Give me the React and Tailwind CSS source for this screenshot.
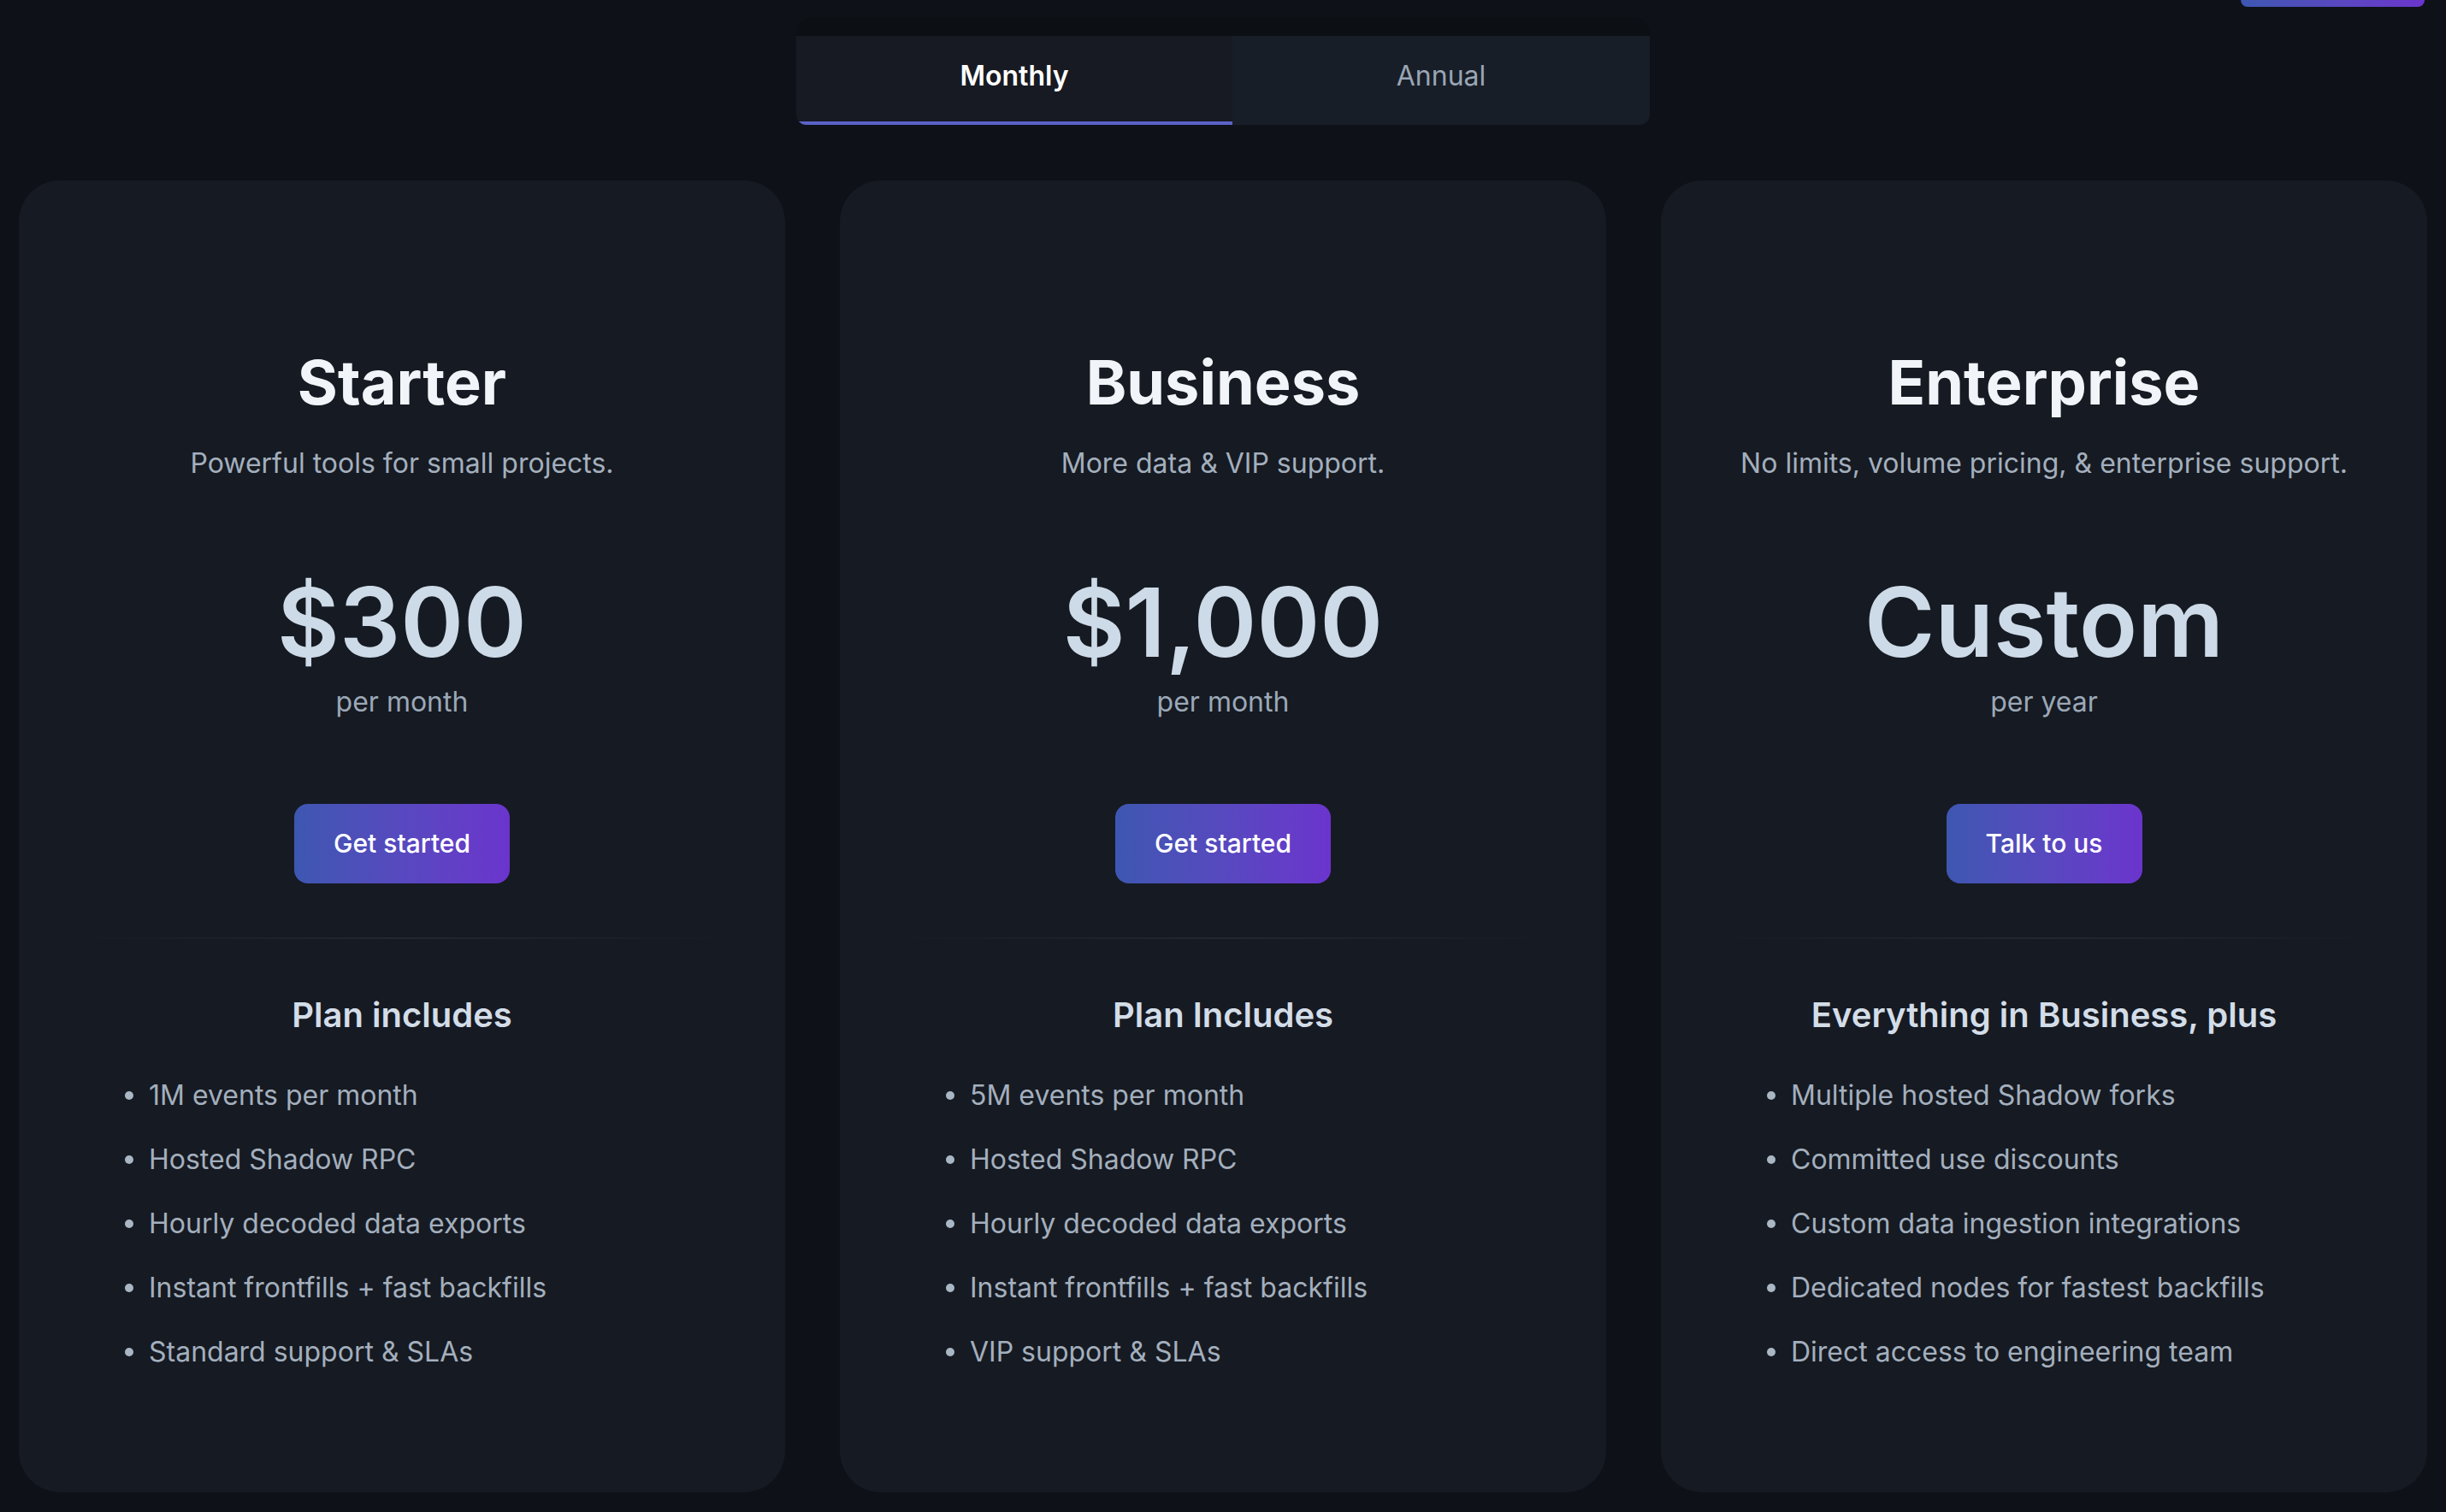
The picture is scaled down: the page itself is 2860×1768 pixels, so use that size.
import { useState } from 'react'

const PLANS = [
  {
    name: 'Starter',
    blurb: 'Powerful tools for small projects.',
    price: '$300',
    period: 'per month',
    cta: 'Get started',
    heading: 'Plan includes',
    features: [
      '1M events per month',
      'Hosted Shadow RPC',
      'Hourly decoded data exports',
      'Instant frontfills + fast backfills',
      'Standard support & SLAs',
    ],
  },
  {
    name: 'Business',
    blurb: 'More data & VIP support.',
    price: '$1,000',
    period: 'per month',
    cta: 'Get started',
    heading: 'Plan Includes',
    features: [
      '5M events per month',
      'Hosted Shadow RPC',
      'Hourly decoded data exports',
      'Instant frontfills + fast backfills',
      'VIP support & SLAs',
    ],
  },
  {
    name: 'Enterprise',
    blurb: 'No limits, volume pricing, & enterprise support.',
    price: 'Custom',
    period: 'per year',
    cta: 'Talk to us',
    heading: 'Everything in Business, plus',
    features: [
      'Multiple hosted Shadow forks',
      'Committed use discounts',
      'Custom data ingestion integrations',
      'Dedicated nodes for fastest backfills',
      'Direct access to engineering team',
    ],
  },
]

function Feature({ children }) {
  return (
    <li className="flex items-center gap-[18px]">
      <span className="size-[10px] shrink-0 rounded-full bg-[#a9b6c4]" />
      <span>{children}</span>
    </li>
  )
}

function PlanCard({ plan }) {
  return (
    <div className="flex flex-col items-center rounded-[48px] bg-[#161a22] pt-[196px] pb-[140px]">
      <h2 className="text-[72px] leading-[80px] font-bold text-[#f1f5f9]">{plan.name}</h2>
      <p className="mt-[31px] text-[32px] leading-[48px] text-[#a3afbd]">{plan.blurb}</p>
      <div className="mt-[105px] text-[112px] leading-[112px] font-semibold text-[#cddae7]">
        {plan.price}
      </div>
      <div className="mt-[14px] text-[32px] leading-[48px] text-[#9ba8b7]">{plan.period}</div>
      <button className="mt-[95px] h-[93px] rounded-[16px] bg-linear-to-r from-[#3d57b1] to-[#6b34cd] px-[46px] text-[30px] font-medium text-white">
        {plan.cta}
      </button>
      <div className="mx-[56px] mt-[63px] h-[2px] self-stretch bg-linear-to-r from-transparent via-[#232831] to-transparent" />
      <h3 className="mt-[61px] text-[40px] leading-[56px] font-semibold text-[#d3dde8]">
        {plan.heading}
      </h3>
      <ul className="mt-[42px] flex flex-col gap-[27px] self-stretch pl-[124px] text-[32px] leading-[48px] text-[#a3afbd]">
        {plan.features.map((f) => (
          <Feature key={f}>{f}</Feature>
        ))}
      </ul>
    </div>
  )
}

export default function App() {
  const [billing, setBilling] = useState('monthly')

  return (
    <div className="min-h-screen bg-[#0e1118] pb-[24px] font-['Inter','Noto_Sans',sans-serif]">
      <div className="mx-auto flex w-[2816px] justify-end pr-[3px]">
        <div className="h-[8px] w-[215px] rounded-b-[12px] bg-linear-to-r from-[#3d57b1] to-[#6b34cd]" />
      </div>

      <div className="mx-auto mt-[12px] w-[998px] rounded-t-[20px] rounded-b-[12px] bg-[#0c0f14] pt-[22px]">
        <div className="grid h-[104px] grid-cols-[510px_1fr] overflow-hidden rounded-b-[12px] text-[32px]">
          <button
            onClick={() => setBilling('monthly')}
            className={
              billing === 'monthly'
                ? 'border-b-4 border-[#5b63c9] bg-[#171a22] pb-[7px] font-semibold text-white'
                : 'bg-[#171a22] pb-[11px] text-[#9aa6b4]'
            }
          >
            Monthly
          </button>
          <button
            onClick={() => setBilling('annual')}
            className={
              billing === 'annual'
                ? 'border-b-4 border-[#5b63c9] bg-[#181e28] pb-[7px] font-semibold text-white'
                : 'bg-[#181e28] pb-[11px] text-[#9aa6b4]'
            }
          >
            Annual
          </button>
        </div>
      </div>

      <div className="mx-auto mt-[65px] grid w-[2816px] grid-cols-3 gap-[64px]">
        {PLANS.map((p) => (
          <PlanCard key={p.name} plan={p} />
        ))}
      </div>
    </div>
  )
}
